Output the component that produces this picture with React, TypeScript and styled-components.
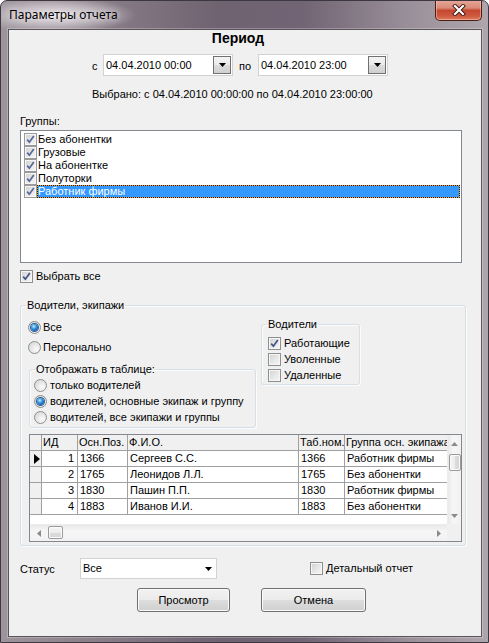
import React from "react";
import styled, { createGlobalStyle } from "styled-components";

const Global = createGlobalStyle`
  html, body { margin: 0; padding: 0; background: #ffffff; }
  body { font-family: "Liberation Sans", Arial, sans-serif; font-size: 11px; color: #000; }
  * { box-sizing: border-box; }
`;

const Window = styled.div`
  width: 489px;
  height: 643px;
  display: flex;
  flex-direction: column;
  padding: 0 6px 5px 7px;
  border: 1px solid #3d383f;
  border-radius: 7px 7px 0 0;
  background: linear-gradient(90deg, #9d949c 0%, #8b808a 18%, #6f6271 45%, #716474 62%, #9a909a 84%, #aea6ac 100%);
  overflow: hidden;
`;

const TitleBar = styled.div`
  height: 28px;
  flex: none;
  display: flex;
  align-items: flex-start;
  background: radial-gradient(ellipse 80px 18px at 55px 14px, rgba(235, 230, 234, 0.95) 0%, rgba(220, 214, 219, 0.6) 55%, rgba(200, 194, 199, 0) 100%);
  margin-left: -7px;
  padding-left: 8px;
`;

const TitleText = styled.span`
  font-family: "Noto Sans", "Liberation Sans", sans-serif;
  font-size: 12px;
  line-height: 16px;
  margin-top: 6px;
  color: #000;
  text-shadow: 0 0 6px rgba(255, 255, 255, 0.9);
`;

const CloseButton = styled.div`
  margin-left: auto;
  margin-top: -1px;
  width: 47px;
  height: 21px;
  display: flex;
  align-items: center;
  justify-content: center;
  border: 1px solid #4d1d14;
  border-top: none;
  border-radius: 0 0 5px 5px;
  background: linear-gradient(180deg, #e6a899 0%, #d98a76 40%, #c4472f 52%, #cf5a40 80%, #dd7a5c 100%);
  box-shadow: inset 0 0 0 1px rgba(255, 220, 210, 0.45);
`;

const Client = styled.div`
  flex: 1;
  display: flex;
  flex-direction: column;
  background: #f0f0f0;
  border: 1px solid #585458;
  box-shadow: 0 0 0 1px rgba(255, 255, 255, 0.25);
`;

const Heading = styled.div`
  font-weight: bold;
  font-size: 14px;
  line-height: 16px;
  text-align: center;
  padding-right: 14px;
`;

const PeriodBlock = styled.div`
  margin-top: 8px;
  padding-left: 83px;
  display: flex;
  flex-direction: column;
`;

const DateRow = styled.div`
  display: flex;
  align-items: center;
  height: 22px;
`;

const DateLabel = styled.span<{ $w: number; $pl: number }>`
  width: ${(p) => p.$w}px;
  padding-left: ${(p) => p.$pl}px;
  padding-top: 2px;
`;

const Combo = styled.div<{ $w: number; $h: number }>`
  width: ${(p) => p.$w}px;
  height: ${(p) => p.$h}px;
  display: flex;
  align-items: center;
  background: #fff;
  border: 1px solid #d2d2d2;
  padding-left: 2px;
`;

const ComboText = styled.span`
  flex: 1;
  line-height: 13px;
`;

const DropButton = styled.div`
  width: 18px;
  height: 18px;
  margin-right: 1px;
  display: flex;
  align-items: center;
  justify-content: center;
  border: 1px solid #707070;
  background: linear-gradient(180deg, #f4f4f4 0%, #e9e9e9 50%, #dcdcdc 51%, #cfcfcf 100%);
`;

const PlainArrow = styled.div`
  margin-right: 4px;
  display: flex;
`;

const Selected = styled.div`
  margin-top: 12px;
  line-height: 13px;
`;

const Label = styled.div<{ $mt: number; $ml?: number }>`
  margin-top: ${(p) => p.$mt}px;
  margin-left: ${(p) => p.$ml ?? 11}px;
  line-height: 13px;
`;

const ListBox = styled.div`
  margin: 2px 0 0 11px;
  width: 442px;
  height: 133px;
  border: 1px solid #828790;
  background: #fff;
  padding: 2px 1px 0 3px;
  display: flex;
  flex-direction: column;
`;

const ListItem = styled.div`
  display: flex;
  align-items: center;
  height: 13px;
`;

const ItemText = styled.span<{ $sel: boolean }>`
  flex: ${(p) => (p.$sel ? 1 : "none")};
  height: 13px;
  line-height: 11px;
  padding-left: ${(p) => (p.$sel ? 0 : 1)}px;
  color: ${(p) => (p.$sel ? "#fff" : "#000")};
  border: 1px ${(p) => (p.$sel ? "dotted #1a1a1a" : "solid transparent")};
  border-left-width: ${(p) => (p.$sel ? 1 : 0)}px;
  background: ${(p) =>
    p.$sel ? "linear-gradient(#3399ff, #3399ff) padding-box, #f0a030 border-box" : "transparent"};
`;

const CheckRow = styled.label<{ $mt?: number; $ml?: number; $h?: number }>`
  display: flex;
  align-items: center;
  gap: 3px;
  height: ${(p) => p.$h ?? 13}px;
  margin-top: ${(p) => p.$mt ?? 0}px;
  margin-left: ${(p) => p.$ml ?? 0}px;
  line-height: 13px;
`;

const BoxWrap = styled.span<{ $light?: boolean }>`
  flex: none;
  width: 13px;
  height: 13px;
  display: flex;
  align-items: center;
  justify-content: center;
  border: 1px solid ${(p) => (p.$light ? "#9a9a9a" : "#8e8f8f")};
  background: linear-gradient(135deg, #d0d0d0 0%, #e6e6e6 50%, #f7f7f7 100%);
  box-shadow: inset 0 0 0 1px #f6f6f6;
`;

const CheckBox: React.FC<{ checked?: boolean; light?: boolean }> = ({ checked, light }) => (
  <BoxWrap $light={light}>
    {checked && (
      <svg width="9" height="9" viewBox="0 0 9 9">
        <path d="M1.2 4.6 L3.4 7.2 L7.8 1" fill="none" stroke={light ? "#56679a" : "#3f5287"} strokeWidth="1.7" />
      </svg>
    )}
  </BoxWrap>
);

const RadioCircle = styled.span<{ $on?: boolean }>`
  flex: none;
  width: 13px;
  height: 13px;
  border-radius: 50%;
  border: 1px solid #8e8f8f;
  background: radial-gradient(circle at 65% 65%, #fbfbfb 0%, #e4e4e4 55%, #cfcfcf 100%);
  display: flex;
  align-items: center;
  justify-content: center;
  &::after {
    content: "";
    display: ${(p) => (p.$on ? "block" : "none")};
    width: 7px;
    height: 7px;
    border-radius: 50%;
    background: radial-gradient(circle at 40% 35%, #c4ecff 0%, #3a9be0 38%, #0d57a8 75%, #0a3a75 100%);
    box-shadow: 0 0 0 1px #2a5f95;
  }
`;

const RadioRow = styled.div<{ $h: number; $gap: number; $ml?: number }>`
  display: flex;
  align-items: center;
  gap: ${(p) => p.$gap}px;
  height: ${(p) => p.$h}px;
  margin-left: ${(p) => p.$ml ?? 0}px;
`;

const Group = styled.fieldset<{ $w: number; $pad: string; $mt?: number; $ml?: number }>`
  margin: ${(p) => p.$mt ?? 0}px 0 0 ${(p) => p.$ml ?? 0}px;
  width: ${(p) => p.$w}px;
  padding: ${(p) => p.$pad};
  min-width: 0;
  flex: none;
  border: 1px solid #d5dfe5;
  border-radius: 3px;
  box-shadow: inset 1px 1px 0 #fcfcfc, 1px 1px 0 #fcfcfc;
`;

const Legend = styled.legend<{ $ml: number }>`
  padding: 0 1px;
  margin-left: ${(p) => p.$ml}px;
  line-height: 13px;
  font-size: 11px;
`;

const TopSection = styled.div`
  display: flex;
  gap: 5px;
  align-items: flex-start;
`;

const LeftColumn = styled.div`
  display: flex;
  flex-direction: column;
  width: 227px;
`;

const DataGrid = styled.div`
  margin-top: 6px;
  width: 433px;
  height: 108px;
  border: 1px solid #828790;
  display: grid;
  grid-template-columns: 417px 14px;
  grid-template-rows: 89px 17px;
  background: #fff;
`;

const GridBody = styled.div`
  overflow: hidden;
  display: flex;
  flex-direction: column;
`;

const GridRow = styled.div`
  display: grid;
  grid-template-columns: 12px 36px 50px 171px 46px 130px;
  height: 16px;
  flex: none;
`;

const Cell = styled.div<{ $head?: boolean; $right?: boolean; $ind?: boolean }>`
  border-right: 1px solid #a0a0a0;
  border-bottom: 1px solid #a0a0a0;
  background: ${(p) => (p.$head || p.$ind ? "#f0f0f0" : "#fff")};
  padding: ${(p) => (p.$right ? "0 3px 0 0" : p.$head ? "0 0 0 1px" : "0 0 0 2px")};
  text-align: ${(p) => (p.$right ? "right" : "left")};
  line-height: 15px;
  white-space: nowrap;
  overflow: hidden;
  display: flex;
  align-items: center;
  justify-content: ${(p) => (p.$right ? "flex-end" : p.$ind ? "center" : "flex-start")};
`;

const ScrollV = styled.div`
  display: flex;
  flex-direction: column;
  background: linear-gradient(90deg, #e9e9e9 0%, #f6f6f6 40%, #f1f1f1 100%);
  border-left: 1px solid #ececec;
`;

const ScrollH = styled.div`
  display: flex;
  background: linear-gradient(180deg, #e9e9e9 0%, #f6f6f6 40%, #f1f1f1 100%);
  border-top: 1px solid #ececec;
`;

const ScrollBtn = styled.div<{ $v?: boolean }>`
  flex: none;
  width: ${(p) => (p.$v ? "100%" : "17px")};
  height: ${(p) => (p.$v ? "17px" : "100%")};
  display: flex;
  align-items: center;
  justify-content: center;
`;

const Thumb = styled.div<{ $v?: boolean }>`
  flex: none;
  width: ${(p) => (p.$v ? "12px" : "15px")};
  height: ${(p) => (p.$v ? "17px" : "13px")};
  margin: ${(p) => (p.$v ? "2px 0 0 1px" : "1px 0 0 1px")};
  border: 1px solid #9a9a9a;
  border-radius: 2px;
  background: ${(p) =>
    p.$v
      ? "linear-gradient(90deg, #f6f6f6 0%, #ececec 50%, #dcdcdc 51%, #d4d4d4 100%)"
      : "linear-gradient(180deg, #f6f6f6 0%, #ececec 50%, #dcdcdc 51%, #d4d4d4 100%)"};
  box-shadow: inset 0 0 0 1px #fbfbfb;
`;

const Spacer = styled.div`
  flex: 1;
`;

const Corner = styled.div`
  background: #f0f0f0;
`;

const StatusRow = styled.div`
  margin: 12px 0 0 11px;
  display: flex;
  align-items: center;
  height: 21px;
`;

const StatusLabel = styled.span`
  width: 60px;
  padding-top: 1px;
`;

const ButtonRow = styled.div`
  margin: 9px 0 0 128px;
  display: flex;
  gap: 31px;
`;

const Button = styled.div<{ $w: number }>`
  width: ${(p) => p.$w}px;
  height: 24px;
  display: flex;
  align-items: center;
  justify-content: center;
  border: 1px solid #707070;
  border-radius: 3px;
  background: linear-gradient(180deg, #f2f2f2 0%, #ebebeb 48%, #dddddd 52%, #cfcfcf 100%);
  box-shadow: inset 0 0 0 1px #fbfbfb;
  padding-bottom: 1px;
`;

const Tri: React.FC<{ dir: "down" | "up" | "left" | "right"; color?: string; size?: number }> = ({
  dir,
  color = "#000",
  size = 7,
}) => {
  const h = Math.ceil(size / 2) + 0;
  const pts: Record<string, string> = {
    down: `0,0 ${size},0 ${size / 2},${h}`,
    up: `0,${h} ${size},${h} ${size / 2},0`,
    right: `0,0 ${h},${size / 2} 0,${size}`,
    left: `${h},0 0,${size / 2} ${h},${size}`,
  };
  const vert = dir === "down" || dir === "up";
  return (
    <svg width={vert ? size : h} height={vert ? h : size} viewBox={`0 0 ${vert ? size : h} ${vert ? h : size}`}>
      <polygon points={pts[dir]} fill={color} />
    </svg>
  );
};

const groups = ["Без абонентки", "Грузовые", "На абонентке", "Полуторки", "Работник фирмы"];

const rows = [
  { id: 1, pos: "1366", name: "Сергеев С.С.", tab: "1366", group: "Работник фирмы" },
  { id: 2, pos: "1765", name: "Леонидов Л.Л.", tab: "1765", group: "Без абонентки" },
  { id: 3, pos: "1830", name: "Пашин П.П.", tab: "1830", group: "Работник фирмы" },
  { id: 4, pos: "1883", name: "Иванов И.И.", tab: "1883", group: "Без абонентки" },
];

export default function App() {
  return (
    <>
      <Global />
      <Window>
        <TitleBar>
          <TitleText>Параметры отчета</TitleText>
          <CloseButton>
            <svg width="14" height="12" viewBox="0 0 14 12">
              <path d="M3 2 L11 10 M11 2 L3 10" stroke="#3b1710" strokeWidth="4" strokeLinecap="square" />
              <path d="M3 2 L11 10 M11 2 L3 10" stroke="#ffffff" strokeWidth="2.2" strokeLinecap="square" />
            </svg>
          </CloseButton>
        </TitleBar>
        <Client>
          <Heading>Период</Heading>
          <PeriodBlock>
            <DateRow>
              <DateLabel $w={11} $pl={0}>с</DateLabel>
              <Combo $w={130} $h={22}>
                <ComboText>04.04.2010 00:00</ComboText>
                <DropButton>
                  <Tri dir="down" />
                </DropButton>
              </Combo>
              <DateLabel $w={25} $pl={6}>по</DateLabel>
              <Combo $w={130} $h={22}>
                <ComboText>04.04.2010 23:00</ComboText>
                <DropButton>
                  <Tri dir="down" />
                </DropButton>
              </Combo>
            </DateRow>
            <Selected>Выбрано: с 04.04.2010 00:00:00 по 04.04.2010 23:00:00</Selected>
          </PeriodBlock>
          <Label $mt={14}>Группы:</Label>
          <ListBox>
            {groups.map((g, i) => (
              <ListItem key={g}>
                <CheckBox checked light />
                <ItemText $sel={i === groups.length - 1}>{g}</ItemText>
              </ListItem>
            ))}
          </ListBox>
          <CheckRow $mt={7} $ml={11}>
            <CheckBox checked />
            <span>Выбрать все</span>
          </CheckRow>
          <Group $w={446} $pad="5px 3px 3px 8px" $mt={16} $ml={11}>
            <Legend $ml={-3}>Водители, экипажи</Legend>
            <TopSection>
              <LeftColumn>
                <RadioRow $h={20} $gap={2} $ml={-1}>
                  <RadioCircle $on />
                  <span>Все</span>
                </RadioRow>
                <RadioRow $h={20} $gap={2} $ml={-1}>
                  <RadioCircle />
                  <span>Персонально</span>
                </RadioRow>
                <Group $w={227} $pad="1px 2px 2px 4px" $mt={6}>
                  <Legend $ml={1}>Отображать в таблице:</Legend>
                  <RadioRow $h={16} $gap={3}>
                    <RadioCircle />
                    <span>только водителей</span>
                  </RadioRow>
                  <RadioRow $h={16} $gap={3}>
                    <RadioCircle $on />
                    <span>водителей, основные экипаж и группу</span>
                  </RadioRow>
                  <RadioRow $h={16} $gap={3}>
                    <RadioCircle />
                    <span>водителей, все экипажи и группы</span>
                  </RadioRow>
                </Group>
              </LeftColumn>
              <Group $w={99} $pad="4px 2px 1px 6px" $mt={1}>
                <Legend $ml={-1}>Водители</Legend>
                <CheckRow $h={16}>
                  <CheckBox checked />
                  <span>Работающие</span>
                </CheckRow>
                <CheckRow $h={16}>
                  <CheckBox />
                  <span>Уволенные</span>
                </CheckRow>
                <CheckRow $h={16}>
                  <CheckBox />
                  <span>Удаленные</span>
                </CheckRow>
              </Group>
            </TopSection>
            <DataGrid>
              <GridBody>
                <GridRow>
                  <Cell $head />
                  <Cell $head>ИД</Cell>
                  <Cell $head>Осн.Поз.</Cell>
                  <Cell $head>Ф.И.О.</Cell>
                  <Cell $head>Таб.ном.</Cell>
                  <Cell $head>Группа осн. экипажа</Cell>
                </GridRow>
                {rows.map((r, i) => (
                  <GridRow key={r.id}>
                    <Cell $ind>
                      {i === 0 && (
                        <svg width="6" height="10" viewBox="0 0 6 10">
                          <polygon points="0,0 6,5 0,10" fill="#000" />
                        </svg>
                      )}
                    </Cell>
                    <Cell $right>{r.id}</Cell>
                    <Cell>{r.pos}</Cell>
                    <Cell>{r.name}</Cell>
                    <Cell>{r.tab}</Cell>
                    <Cell>{r.group}</Cell>
                  </GridRow>
                ))}
              </GridBody>
              <ScrollV>
                <ScrollBtn $v>
                  <Tri dir="up" color="#8a8a8a" />
                </ScrollBtn>
                <Thumb $v />
                <Spacer />
                <ScrollBtn $v>
                  <Tri dir="down" color="#8a8a8a" />
                </ScrollBtn>
              </ScrollV>
              <ScrollH>
                <ScrollBtn>
                  <Tri dir="left" color="#8a8a8a" />
                </ScrollBtn>
                <Thumb />
                <Spacer />
                <ScrollBtn>
                  <Tri dir="right" color="#8a8a8a" />
                </ScrollBtn>
              </ScrollH>
              <Corner />
            </DataGrid>
          </Group>
          <StatusRow>
            <StatusLabel>Статус</StatusLabel>
            <Combo $w={137} $h={21}>
              <ComboText>Все</ComboText>
              <PlainArrow>
                <Tri dir="down" />
              </PlainArrow>
            </Combo>
            <CheckRow $ml={93}>
              <CheckBox />
              <span>Детальный отчет</span>
            </CheckRow>
          </StatusRow>
          <ButtonRow>
            <Button $w={93}>Просмотр</Button>
            <Button $w={105}>Отмена</Button>
          </ButtonRow>
        </Client>
      </Window>
    </>
  );
}
